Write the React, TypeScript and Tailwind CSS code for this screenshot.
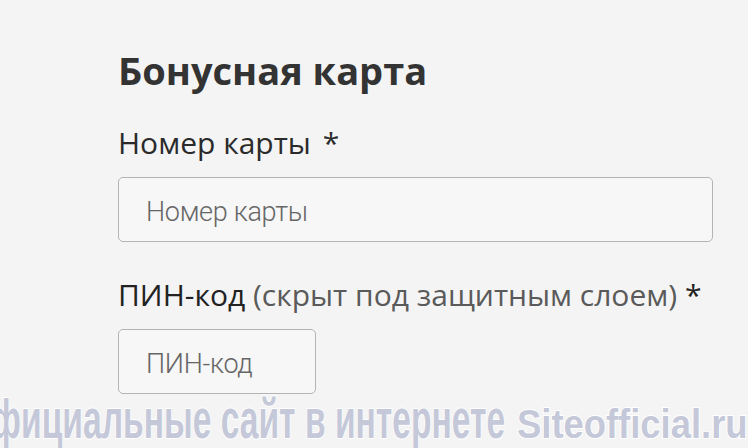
export default function App() {
  return (
    <div className="relative w-[748px] h-[448px] overflow-hidden bg-[#f4f4f4] font-['Open_Sans',sans-serif]">
      <div className="flex flex-col pl-[118px] pt-[51px]">
        <h2 className="text-[38px] leading-none font-bold text-[#333333]">Бонусная карта</h2>

        <label className="mt-[39px] text-[30px] leading-none text-[#2b2b2b]">
          Номер карты <span className="ml-1">*</span>
        </label>
        <div className="mt-[19px] flex h-[65px] w-[595px] items-center rounded-[5px] border border-[#b4b4b4] bg-[#f7f7f7] pl-[27px] pt-[6px]">
          <span className="font-['Roboto',sans-serif] text-[27px] font-light tracking-[-0.3px] text-[#666666]">Номер карты</span>
        </div>

        <label className="mt-[38px] text-[30px] leading-none text-[#222222]">
          ПИН-код <span className="text-[#5a5a5a]">(скрыт под защитным слоем)</span> *
        </label>
        <div className="mt-[19px] flex h-[65px] w-[198px] items-center rounded-[5px] border border-[#b4b4b4] bg-[#f7f7f7] pl-[27px] pt-[6px]">
          <span className="font-['Roboto',sans-serif] text-[27px] font-light tracking-[-0.3px] text-[#666666]">ПИН-код</span>
        </div>
      </div>

      {/* watermark */}
      <div className="absolute inset-x-0 top-[391px] flex items-baseline whitespace-nowrap font-['Liberation_Sans',sans-serif] font-bold leading-none text-[#c4c8d8] [-webkit-text-stroke:2px_#ffffff] [paint-order:stroke_fill]">
        <div className="flex min-w-0 flex-1 justify-end pr-[12px]">
          <span className="inline-block shrink-0 origin-right scale-x-[0.6] text-[56px]">официальные сайт в интернете</span>
        </div>
        <div className="w-[231px] shrink-0">
          <span className="inline-block origin-left scale-x-[0.91] text-[40px]">Siteofficial.ru</span>
        </div>
      </div>
    </div>
  );
}
